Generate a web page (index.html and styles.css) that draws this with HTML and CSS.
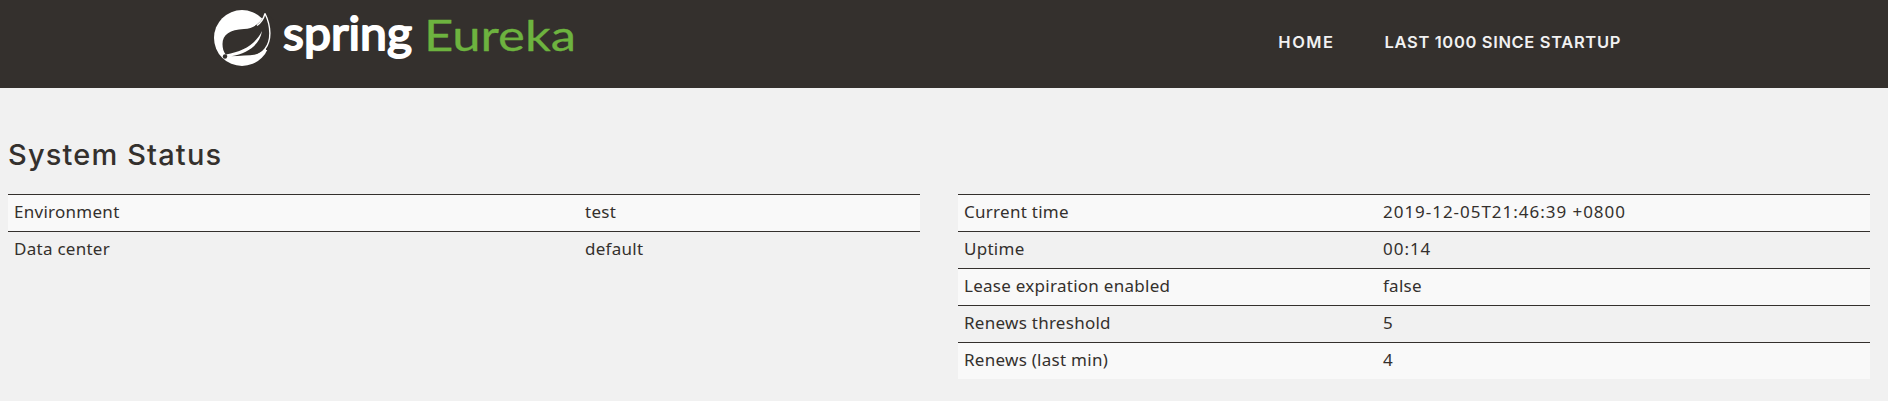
FILE: index.html
```html
<!DOCTYPE html>
<html lang="en">
<head>
  <meta charset="UTF-8" />
  <meta name="viewport" content="width=device-width, initial-scale=1.0"/>
  <title>Eureka</title>
  <link rel="stylesheet" href="styles.css">
</head>
<body>

  <!-- Navigation Bar -->
  <nav class="navbar">
    <a class="brand" href="/">
      <svg width="376" height="88" viewBox="206 0 376 88">
        <circle cx="242" cy="38" r="28" fill="#fff"/>
        <path class="leaf-gap" d="M264.500 12L274 20V50H266Z"/>
        <path class="leaf" d="M265 13.500C261 23 254 28.500 244 29C230 29.500 222.500 34.500 222.500 44C222.500 48 223.500 52 226 55L229 56.500C246 57.500 258 57 265 49C271 41 271 27 265 13.500Z"/>
        <path d="M226 54.500C243 51 255 45 262 31C260 44 249 53 231 56.200C242 56 251 55.500 260 54C253 58.500 243 58.500 229 57.500Z" fill="#fff"/>
        <path class="vein" d="M265 13.500C271.500 27 271.500 41 265 49C261 54 256 56 250 57"/>
        <path class="vein" d="M265 13.500C263.500 19 260.500 23 257 25.500"/>
        <circle class="leaf" cx="225" cy="56.500" r="2.200"/>
        <text class="logo-spring" x="283" y="50" textLength="129" lengthAdjust="spacingAndGlyphs">spring</text>
        <text class="logo-eureka" x="424" y="50.500" textLength="152" lengthAdjust="spacingAndGlyphs">Eureka</text>
      </svg>
    </a>
    <ul class="nav-links">
      <li><a class="home" href="/">Home</a></li>
      <li><a class="lastn" href="/lastn">Last 1000 since startup</a></li>
    </ul>
  </nav>

  <div class="content">
    <h1>System Status</h1>
    <div class="row">
      <table class="environment">
        <tbody>
          <tr><td>Environment</td><td>test</td></tr>
          <tr><td>Data center</td><td>default</td></tr>
        </tbody>
      </table>

      <table class="instance">
        <tbody>
          <tr><td>Current time</td><td class="time">2019-12-05T21:46:39 +0800</td></tr>
          <tr><td>Uptime</td><td class="time">00:14</td></tr>
          <tr><td>Lease expiration enabled</td><td>false</td></tr>
          <tr><td>Renews threshold</td><td>5</td></tr>
          <tr><td>Renews (last min)</td><td>4</td></tr>
        </tbody>
      </table>
    </div>
  </div>

</body>
</html>
```

FILE: styles.css
```css
body {
  margin: 0;
  background-color: #f1f1f1;
  color: #34302d;
  font-family: "Noto Sans", sans-serif;
  font-size: 17px;
  line-height: 20px;
}

.navbar {
  height: 88px;
  padding: 0 267px 0 206px;
  display: flex;
  justify-content: space-between;
  background-color: #34302d;
}

.brand svg {
  display: block;
}

.leaf,
.leaf-gap {
  fill: #34302d;
}

.vein {
  fill: none;
  stroke: #fff;
  stroke-width: 1.4;
}

.logo-spring,
.logo-eureka {
  font-family: Lato, sans-serif;
  stroke-linejoin: round;
}

.logo-spring {
  font-size: 47px;
  fill: #fff;
  stroke: #fff;
  stroke-width: 2;
}

.logo-eureka {
  font-size: 43px;
  fill: #6db33f;
  stroke: #6db33f;
  stroke-width: 0.3;
}

.nav-links {
  margin: 0;
  padding: 32px 0 0;
  display: flex;
  gap: 50px;
  list-style: none;
}

.nav-links a {
  color: #f1f1f1;
  font-family: Inter, sans-serif;
  font-size: 16.5px;
  font-weight: 600;
  text-decoration: none;
  text-transform: uppercase;
}

.home {
  letter-spacing: 1.5px;
}

.lastn {
  letter-spacing: 0.65px;
}

.content {
  padding: 49px 18px 0 8px;
}

h1 {
  margin: 0;
  height: 57px;
  font-family: Inter, sans-serif;
  font-size: 29px;
  font-weight: 500;
  line-height: 35px;
  letter-spacing: 1.15px;
}

.row {
  display: grid;
  grid-template-columns: 1fr 1fr;
  column-gap: 38px;
  align-items: start;
}

table {
  width: 100%;
  table-layout: fixed;
  border-spacing: 0;
}

td {
  height: 20px;
  padding: 7px 6px 9px;
  border-top: 1px solid #34302d;
  letter-spacing: 0.27px;
}

tr:nth-child(odd) td {
  background-color: #f9f9f9;
}

.environment td:first-child {
  width: 559px;
}

.instance td:first-child {
  width: 407px;
}

.instance .time {
  letter-spacing: 0.97px;
}
```
